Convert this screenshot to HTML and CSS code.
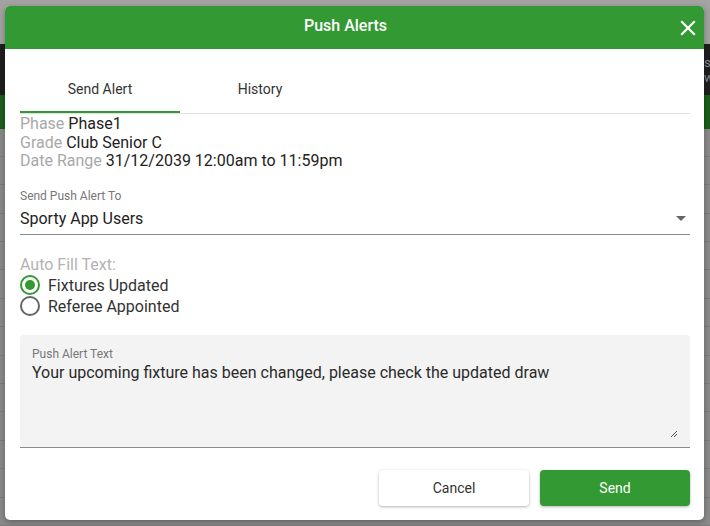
FILE: index.html
```html
<!DOCTYPE html>
<html>
<head>
<meta charset="utf-8">
<link rel="stylesheet" href="styles.css">
</head>
<body>
<div class="page">
  <div class="page-top"></div>
  <div class="page-dark"><span class="page-dark-text">s<br>w</span></div>
  <div class="page-green"></div>
  <div class="page-rows">
    <div class="row"></div><div class="row"></div><div class="row"></div><div class="row"></div>
    <div class="row"></div><div class="row"></div><div class="row"></div><div class="row"></div>
    <div class="row"></div><div class="row"></div><div class="row"></div><div class="row"></div>
    <div class="row"></div><div class="row"></div>
  </div>
</div>

<div class="modal">
  <div class="modal-header">
    <span class="modal-title">Push Alerts</span>
    <span class="close">
      <svg width="16" height="16" viewBox="0 0 16 16"><path d="M2 2 L14 14 M14 2 L2 14" stroke="#fff" stroke-width="2.2" stroke-linecap="square"/></svg>
    </span>
  </div>
  <div class="modal-body">
    <div class="tabs">
      <div class="tab active">Send Alert</div>
      <div class="tab">History</div>
    </div>
    <div class="info">
      <div><span class="lbl">Phase</span> Phase1</div>
      <div><span class="lbl">Grade</span> Club Senior C</div>
      <div><span class="lbl">Date Range</span> 31/12/2039 12:00am to 11:59pm</div>
    </div>
    <div class="select-field">
      <div class="field-label">Send Push Alert To</div>
      <div class="select-value">
        <span>Sporty App Users</span>
        <span class="caret"></span>
      </div>
    </div>
    <div class="autofill">
      <div class="autofill-label">Auto Fill Text:</div>
      <label class="radio"><span class="circle checked"><span class="dot"></span></span>Fixtures Updated</label>
      <label class="radio"><span class="circle"></span>Referee Appointed</label>
    </div>
    <div class="textarea">
      <div class="field-label ta-label">Push Alert Text</div>
      <div class="ta-text">Your upcoming fixture has been changed, please check the updated draw</div>
      <svg class="resize" width="8" height="8" viewBox="0 0 8 8"><path d="M7 1 L1 7 M7 4 L4 7" stroke="#555" stroke-width="1"/></svg>
    </div>
    <div class="actions">
      <button class="btn cancel">Cancel</button>
      <button class="btn send">Send</button>
    </div>
  </div>
</div>
</body>
</html>
```

FILE: styles.css
```css
* { box-sizing: border-box; }
html, body { margin: 0; padding: 0; }
body {
  width: 710px;
  height: 526px;
  overflow: hidden;
  font-family: Roboto, "Liberation Sans", sans-serif;
  background: #8a8a8a;
  position: relative;
}
.page { width: 710px; height: 526px; display: flex; flex-direction: column; }
.page-top { height: 48px; background: #a3a3a3; }
.page-dark { height: 56px; background: #1e1e1e; display: flex; justify-content: flex-end; align-items: center; }
.page-dark-text { color: #8a8a8a; font-size: 13px; line-height: 15px; width: 6px; overflow: hidden; margin-top: 2px; }
.page-green { height: 37px; background: #1c5e1c; }
.page-rows { flex: 1; display: flex; flex-direction: column; }
.row { height: 28.4px; border-bottom: 1px solid #7c7c7c; flex: none; }

.modal {
  position: absolute;
  left: 5px;
  top: 6px;
  width: 699px;
  height: 514px;
  background: #fff;
  border-radius: 5px;
  overflow: hidden;
  box-shadow: 0 2px 6px rgba(0,0,0,0.3);
  display: flex;
  flex-direction: column;
}
.modal-header {
  height: 43px;
  background: #339933;
  display: flex;
  align-items: center;
  justify-content: center;
  position: relative;
  flex: none;
  padding-right: 18px;
}
.modal-title { color: #fff; font-size: 16px; font-weight: 500; margin-top: -5px; }
.close { position: absolute; right: 8px; top: 14px; width: 16px; height: 16px; display: flex; }

.modal-body { padding: 16px 14px 0 15px; display: flex; flex-direction: column; }
.tabs {
  display: flex;
  border-bottom: 1px solid #e0e0e0;
  height: 49px;
}
.tab {
  width: 160px;
  text-align: center;
  font-size: 14px;
  color: #333;
  line-height: 16px;
  padding-top: 16px;
}
.tab.active { border-bottom: 2px solid #339933; }

.info { font-size: 16px; color: #222; line-height: 18.5px; margin-top: 1px; }
.lbl { color: #a8a8a8; }

.select-field { margin-top: 18px; }
.field-label { font-size: 12px; color: #777; line-height: 14px; }
.select-value {
  display: flex;
  justify-content: space-between;
  align-items: center;
  font-size: 16px;
  color: #222;
  height: 30px;
  line-height: 27px;
  padding-bottom: 1px;
  border-bottom: 1px solid #8a8a8a;
  margin-top: 2px;
}
.caret {
  width: 0; height: 0;
  border-left: 5px solid transparent;
  border-right: 5px solid transparent;
  border-top: 5px solid #666;
  margin-right: 4px;
}

.autofill { margin-top: 20px; display: flex; flex-direction: column; }
.autofill-label { font-size: 16px; color: #b3b3b3; line-height: 20px; }
.radio { display: flex; align-items: center; font-size: 16px; color: #333; height: 21px; gap: 8px; }
.circle {
  width: 20px; height: 20px; border-radius: 50%;
  border: 2px solid #666;
  display: flex; align-items: center; justify-content: center;
}
.circle.checked { border-color: #339933; }
.dot { width: 10px; height: 10px; border-radius: 50%; background: #339933; }

.textarea {
  margin-top: 18px;
  height: 113px;
  background: #f3f3f3;
  border-radius: 4px 4px 0 0;
  border-bottom: 1px solid #8a8a8a;
  padding: 12px 12px 0 12px;
  position: relative;
}
.ta-label { color: #777; }
.ta-text { font-size: 16px; color: #2a2a2a; margin-top: 2px; line-height: 19px; }
.resize { position: absolute; right: 12px; bottom: 9px; }

.actions { display: flex; justify-content: flex-end; gap: 11px; margin-top: 22px; }
.btn {
  width: 150px;
  height: 36px;
  border: none;
  border-radius: 4px;
  font-family: Roboto, "Liberation Sans", sans-serif;
  font-size: 14px;
  box-shadow: 0 1px 3px rgba(0,0,0,0.3);
}
.cancel { background: #fff; color: #333; }
.send { background: #339933; color: #fff; }
```
